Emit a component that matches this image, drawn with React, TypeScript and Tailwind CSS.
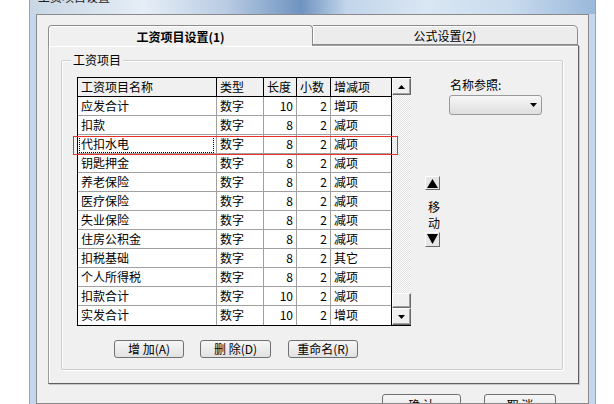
import React from "react";

const rows: string[][] = [
  ["应发合计", "数字", "10", "2", "增项"],
  ["扣款", "数字", "8", "2", "减项"],
  ["代扣水电", "数字", "8", "2", "减项"],
  ["钥匙押金", "数字", "8", "2", "减项"],
  ["养老保险", "数字", "8", "2", "减项"],
  ["医疗保险", "数字", "8", "2", "减项"],
  ["失业保险", "数字", "8", "2", "减项"],
  ["住房公积金", "数字", "8", "2", "减项"],
  ["扣税基础", "数字", "8", "2", "其它"],
  ["个人所得税", "数字", "8", "2", "减项"],
  ["扣款合计", "数字", "10", "2", "减项"],
  ["实发合计", "数字", "10", "2", "增项"],
];

function Tri({ up, w = 7, h = 4 }: { up?: boolean; w?: number; h?: number }) {
  return (
    <svg width={w} height={h} viewBox={`0 0 ${w} ${h}`}>
      {up ? (
        <polygon points={`0,${h} ${w},${h} ${w / 2},0`} fill="#000" />
      ) : (
        <polygon points={`0,0 ${w},0 ${w / 2},${h}`} fill="#000" />
      )}
    </svg>
  );
}

function ScrollBtn({ up }: { up?: boolean }) {
  return (
    <div className="h-[17px] w-[19px] flex items-center justify-center bg-[#f0f0f0] border border-t-white border-l-white border-r-[#696969] border-b-[#696969] shadow-[inset_-1px_-1px_0_#a0a0a0]">
      <Tri up={up} />
    </div>
  );
}

function Btn({ label, w }: { label: string; w: string }) {
  return (
    <div
      className={`${w} h-[18px] flex items-center justify-center rounded-[3px] border border-[#707070] bg-[linear-gradient(#f6f6f6,#e2e2e2)] text-[12px] leading-[16px]`}
    >
      {label}
    </div>
  );
}

export default function App() {
  return (
    <div className="w-[614px] h-[404px] bg-white overflow-hidden font-['Noto_Sans_CJK_SC',sans-serif] text-[12px] text-black">
      <div className="ml-[29px] w-[567px] h-[404px] flex flex-col border-l border-r border-[#8aa6c8] bg-[#c4d7ec]">
        {/* title strip */}
        <div className="h-[14px] overflow-hidden bg-[linear-gradient(90deg,#c9d6e4_0%,#d8e3ee_12%,#e6eef7_20%,#b7cbe2_35%,#6f93c0_48%,#c2d5ea_56%,#d9e6f3_70%,#c9dbee_85%,#9ab8da_100%)]">
          <div className="ml-[8px] -mt-[10px] text-[12px] leading-[14px] text-[#1e1e1e]">工资项目设置</div>
        </div>
        {/* client */}
        <div className="mx-[6px] flex-1 bg-[#f0f0f0] border border-[#8a8a8a] pl-[11px] pt-[10px] overflow-hidden">
          {/* tabs */}
          <div className="relative z-10 flex h-[20px] items-start">
            <div className="w-[265px] h-[21px] bg-[#f0f0f0] border border-b-0 border-[#8c8c8c] rounded-t-[4px] shadow-[inset_1px_1px_0_#fff] flex items-center justify-center font-bold text-[12px] leading-[16px] pt-[2px]">
              工资项目设置(1)
            </div>
            <div className="w-[265px] h-[20px] bg-[#ececec] border border-l-0 border-[#8c8c8c] rounded-tr-[5px] shadow-[inset_1px_1px_0_#fff] flex items-center justify-center text-[12px] leading-[16px] pt-[1px]">
              公式设置(2)
            </div>
          </div>
          {/* panel */}
          <div className="w-[531px] h-[339px] bg-[#f0f0f0] border border-[#9c9c9c] border-r-[#5f5f5f] border-b-[#5f5f5f] shadow-[inset_1px_1px_0_#fff,1px_1px_0_#c8c8c8] pl-[12px] pt-[14px]">
            {/* group box */}
            <div className="relative w-[502px] h-[310px] border border-[#cdcdcd] rounded-[2px] shadow-[inset_1px_1px_0_#fff,1px_1px_0_#fff] pl-[15px] pt-[16px] flex">
              <div className="absolute left-[9px] -top-[9px] px-[2px] bg-[#f0f0f0] text-[12px] leading-[16px]">
                工资项目
              </div>
              {/* left column */}
              <div className="flex flex-col">
                <div className="relative flex w-[334px] border-l border-t border-b border-black">
                  <div className="w-[314px] border-r border-black">
                    <div className="grid grid-cols-[139px_47px_33px_34px_60px] h-[19px] border-b border-black leading-[18px]">
                      <div className="pl-[3px] border-r border-black">工资项目名称</div>
                      <div className="pl-[3px] border-r border-black">类型</div>
                      <div className="pl-[3px] border-r border-black">长度</div>
                      <div className="pl-[3px] border-r border-black">小数</div>
                      <div className="pl-[3px]">增减项</div>
                    </div>
                    {rows.map((r, i) => (
                      <div
                        key={i}
                        className={`grid grid-cols-[139px_47px_33px_34px_60px] h-[19px] leading-[18px] bg-white ${
                          i < rows.length - 1 ? "border-b border-[#a0a0a0]" : ""
                        }`}
                      >
                        <div className="relative pl-[3px] border-r border-[#a0a0a0]">
                          {i === 2 && (
                            <div className="absolute left-[1px] top-[1px] right-[2px] bottom-[0px] border border-dotted border-black" />
                          )}
                          {r[0]}
                        </div>
                        <div className="pl-[3px] border-r border-[#a0a0a0]">{r[1]}</div>
                        <div className="pr-[3px] text-right border-r border-[#a0a0a0]">{r[2]}</div>
                        <div className="pr-[3px] text-right border-r border-[#a0a0a0]">{r[3]}</div>
                        <div className="pl-[3px]">{r[4]}</div>
                      </div>
                    ))}
                  </div>
                  {/* scrollbar */}
                  <div className="w-[19px] flex flex-col">
                    <ScrollBtn up />
                    <div className="flex-1 flex flex-col justify-end bg-[repeating-conic-gradient(#e4e4e4_0_25%,#fbfbfb_0_50%)] bg-[length:2px_2px]">
                      <div className="h-[15px] bg-[#f0f0f0] border border-t-white border-l-white border-r-[#696969] border-b-[#696969] shadow-[inset_-1px_-1px_0_#a0a0a0]" />
                    </div>
                    <ScrollBtn />
                  </div>
                  {/* red annotation */}
                  <div className="absolute left-[-5px] top-[58px] w-[325px] h-[19px] border border-[#e8312f]" />
                </div>
                {/* buttons */}
                <div className="flex mt-[14px] ml-[37px]">
                  <Btn label="增 加(A)" w="w-[70px]" />
                  <div className="ml-[16px]">
                    <Btn label="删 除(D)" w="w-[71px]" />
                  </div>
                  <div className="ml-[17px]">
                    <Btn label="重命名(R)" w="w-[70px]" />
                  </div>
                </div>
              </div>
              {/* right column */}
              <div className="ml-[14px] flex flex-col">
                <div className="ml-[25px] h-[16px] leading-[16px]">名称参照:</div>
                <div className="ml-[24px] mt-[2px] w-[93px] h-[20px] rounded-[3px] border border-[#9a9a9a] bg-[linear-gradient(#f7f7f7,#dedede)] flex items-center justify-end pr-[4px]">
                  <Tri w={7} h={4} />
                </div>
                <div className="mt-[61px] w-[15px] h-[14px] flex items-end justify-center bg-[#e6e6e6] border border-t-white border-l-white border-r-[#696969] border-b-[#696969] pb-[1px]">
                  <Tri up w={11} h={9} />
                </div>
                <div className="mt-[9px] w-[18px] flex flex-col items-center leading-[16px]">
                  <div>移</div>
                  <div>动</div>
                </div>
                <div className="mt-[1px] w-[15px] h-[15px] flex items-start justify-center bg-[#e6e6e6] border border-t-white border-l-white border-r-[#696969] border-b-[#696969] pt-[1px]">
                  <Tri w={11} h={10} />
                </div>
              </div>
            </div>
          </div>
          {/* bottom buttons */}
          <div className="flex justify-end mt-[10px] mr-[32px]">
            <div className="w-[79px] h-[22px] rounded-[3px] border border-[#707070] bg-[linear-gradient(#f6f6f6,#e2e2e2)] flex justify-center pt-[2px] leading-[16px]">
              确 认
            </div>
            <div className="ml-[23px] w-[72px] h-[22px] rounded-[3px] border border-[#707070] bg-[linear-gradient(#f6f6f6,#e2e2e2)] flex justify-center pt-[2px] leading-[16px]">
              取 消
            </div>
          </div>
        </div>
      </div>
    </div>
  );
}
